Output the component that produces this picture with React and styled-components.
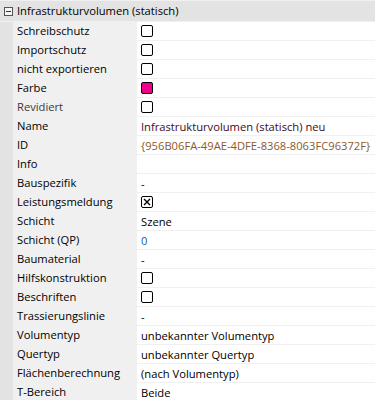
import React from "react";
import styled, { createGlobalStyle } from "styled-components";

const Global = createGlobalStyle`
  html, body { margin: 0; padding: 0; background: #f0f0f0; }
  body { font-family: "Open Sans", "Noto Sans", sans-serif; }
`;

const Grid = styled.div`
  width: 375px;
  height: 400px;
  overflow: hidden;
  background: #f0f0f0;
  font-size: 11.2px;
  color: #000;
`;

const Header = styled.div`
  display: flex;
  align-items: center;
  height: 20px;
  margin-top: 1px;
  background: #e3e3e3;
  padding-left: 4px;
  gap: 4px;
  border-bottom: 1px solid #f0f0f0;
`;

const Toggle = styled.span`
  width: 9px;
  height: 9px;
  border: 1px solid #555;
  box-sizing: border-box;
  display: flex;
  align-items: center;
  justify-content: center;
  background: #f5f5f5;
  &::after {
    content: "";
    width: 5px;
    height: 1px;
    background: #333;
  }
`;

const HeaderText = styled.span`
  line-height: 20px;
  white-space: nowrap;
`;

const Body = styled.div`
  display: flex;
`;

const Gutter = styled.div`
  width: 13px;
  flex: none;
  background: #e3e3e3;
`;

const Rows = styled.div`
  flex: 1;
  display: flex;
  flex-direction: column;
  gap: 1px;
`;

const Row = styled.div`
  display: grid;
  grid-template-columns: 124px 1fr;
  height: 18px;
`;

const Label = styled.div`
  padding-left: 4px;
  line-height: 18px;
  white-space: nowrap;
  color: ${(p) => (p.$dim ? "#3a3a3a" : "#000")};
  background: #f0f0f0;
`;

const Value = styled.div`
  background: #fff;
  padding-left: 4px;
  display: flex;
  align-items: center;
  white-space: nowrap;
  overflow: hidden;
  color: ${(p) => p.$color || "#000"};
`;

const Box = styled.span`
  width: 12px;
  height: 12px;
  box-sizing: border-box;
  border: 1px solid #000;
  border-radius: 2px;
  background: ${(p) => p.$fill || "#fff"};
  display: flex;
  align-items: center;
  justify-content: center;
`;

const Cross = () => (
  <svg width="8" height="8" viewBox="0 0 8 8">
    <path d="M1 1L7 7M7 1L1 7" stroke="#000" strokeWidth="1.4" />
  </svg>
);

const rows = [
  ["Schreibschutz", { box: true }],
  ["Importschutz", { box: true }],
  ["nicht exportieren", { box: true }],
  ["Farbe", { box: true, fill: "#f0008c" }],
  ["Revidiert", { box: true }, true],
  ["Name", { text: "Infrastrukturvolumen (statisch) neu", color: "#3d0a25" }],
  ["ID", { text: "{956B06FA-49AE-4DFE-8368-8063FC96372F}", color: "#8a5a2e" }],
  ["Info", { text: "" }],
  ["Bauspezifik", { text: "-" }],
  ["Leistungsmeldung", { box: true, checked: true }],
  ["Schicht", { text: "Szene" }],
  ["Schicht (QP)", { text: "0", color: "#1060b0" }],
  ["Baumaterial", { text: "-" }],
  ["Hilfskonstruktion", { box: true }],
  ["Beschriften", { box: true }],
  ["Trassierungslinie", { text: "-" }],
  ["Volumentyp", { text: "unbekannter Volumentyp" }],
  ["Quertyp", { text: "unbekannter Quertyp" }],
  ["Flächenberechnung", { text: "(nach Volumentyp)" }],
  ["T-Bereich", { text: "Beide" }],
];

export default function App() {
  return (
    <Grid>
      <Global />
      <Header>
        <Toggle />
        <HeaderText>Infrastrukturvolumen (statisch)</HeaderText>
      </Header>
      <Body>
        <Gutter />
        <Rows>
          {rows.map(([label, v, dim]) => (
            <Row key={label}>
              <Label $dim={dim}>{label}</Label>
              <Value $color={v.color}>
                {v.box ? (
                  <Box $fill={v.fill}>{v.checked ? <Cross /> : null}</Box>
                ) : (
                  v.text
                )}
              </Value>
            </Row>
          ))}
        </Rows>
      </Body>
    </Grid>
  );
}
